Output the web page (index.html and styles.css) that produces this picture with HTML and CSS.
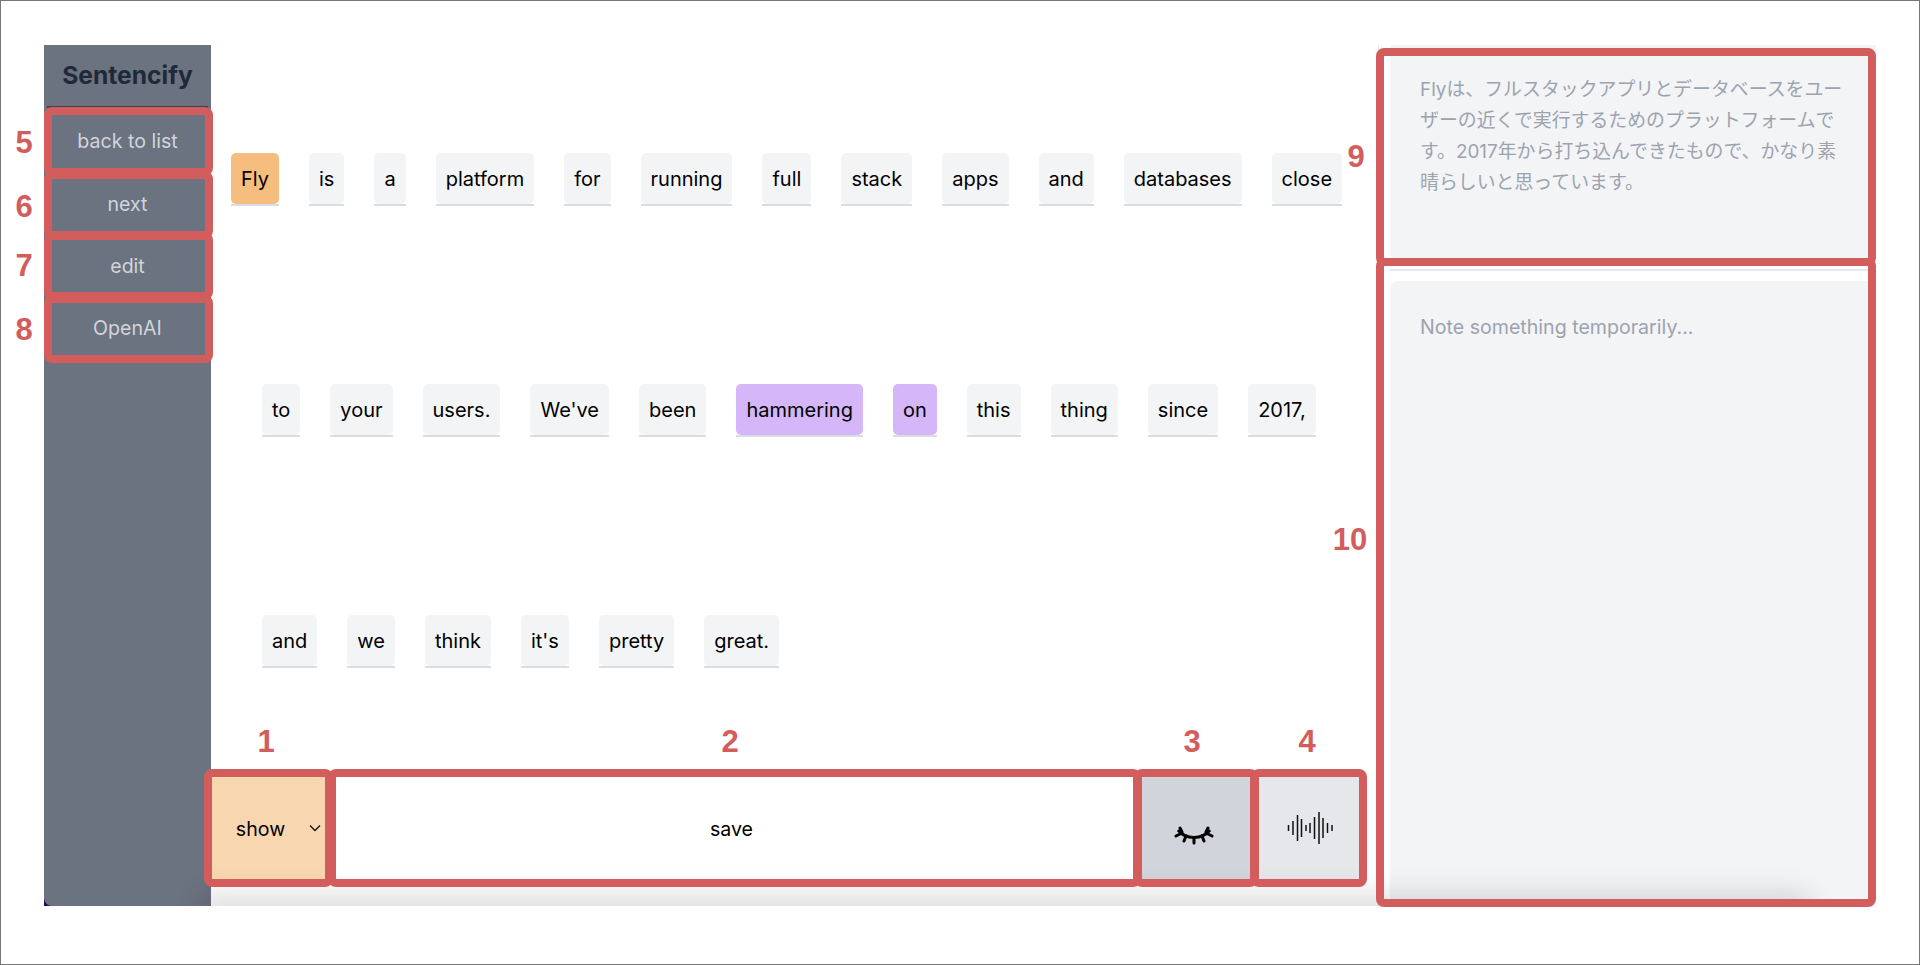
FILE: index.html
```html
<!DOCTYPE html>
<html lang="en">
<head>
    <meta charset="UTF-8">
    <meta name="viewport" content="width=device-width, initial-scale=1.0">
    <title>Sentencify</title>
    <link rel="stylesheet" href="styles.css">
</head>
<body>
    <div class="frame">
        <div class="app">
            <aside class="sidebar">
                <h1 class="brand">Sentencify</h1>
                <button class="side-btn">back to list</button>
                <button class="side-btn">next</button>
                <button class="side-btn">edit</button>
                <button class="side-btn">OpenAI</button>
            </aside>

            <main class="main">
                <div class="lines">
                    <div class="line line-first">
                        <div class="word word-orange"><span>Fly</span></div>
                        <div class="word"><span>is</span></div>
                        <div class="word"><span>a</span></div>
                        <div class="word"><span>platform</span></div>
                        <div class="word"><span>for</span></div>
                        <div class="word"><span>running</span></div>
                        <div class="word"><span>full</span></div>
                        <div class="word"><span>stack</span></div>
                        <div class="word"><span>apps</span></div>
                        <div class="word"><span>and</span></div>
                        <div class="word"><span>databases</span></div>
                        <div class="word"><span>close</span></div>
                    </div>
                    <div class="line">
                        <div class="word"><span>to</span></div>
                        <div class="word"><span>your</span></div>
                        <div class="word"><span>users.</span></div>
                        <div class="word"><span>We've</span></div>
                        <div class="word"><span>been</span></div>
                        <div class="word word-purple"><span>hammering</span></div>
                        <div class="word word-purple"><span>on</span></div>
                        <div class="word"><span>this</span></div>
                        <div class="word"><span>thing</span></div>
                        <div class="word"><span>since</span></div>
                        <div class="word"><span>2017,</span></div>
                    </div>
                    <div class="line">
                        <div class="word"><span>and</span></div>
                        <div class="word"><span>we</span></div>
                        <div class="word"><span>think</span></div>
                        <div class="word"><span>it's</span></div>
                        <div class="word"><span>pretty</span></div>
                        <div class="word"><span>great.</span></div>
                    </div>
                </div>

                <div class="toolbar">
                    <button class="tool tool-show">
                        show
                        <svg class="chevron" width="12" height="8" viewBox="0 0 12 8"><path d="M1 1.5 L6 6.5 L11 1.5" fill="none" stroke="#111" stroke-width="1.3"/></svg>
                    </button>
                    <button class="tool tool-save">save</button>
                    <button class="tool tool-eye">
                        <svg class="eye" width="40" height="24" viewBox="0 0 40 24">
                            <path d="M4 5 C12 15 28 15 36 5" fill="none" stroke="#000" stroke-width="3"/>
                            <path d="M6 3 L8 7 M2 11 L8 8 M10 16 L12 11 M20 18 L20 13 M30 16 L28 11 M38 11 L32 8 M34 3 L32 7" fill="none" stroke="#000" stroke-width="3" stroke-linecap="round"/>
                        </svg>
                    </button>
                    <button class="tool tool-sound">
                        <svg width="46" height="34" viewBox="0 0 46 34">
                            <path d="M1.5 14 V20 M6 10 V24 M10.5 4 V30 M14.5 8 V26 M19 14 V20 M23 12 V22 M27.5 6 V28 M32 1 V33 M36 7 V27 M40.5 12 V22 M45 14 V20" fill="none" stroke="#111" stroke-width="1.5"/>
                        </svg>
                    </button>
                </div>
            </main>

            <section class="notes">
                <div class="panel panel-translation">Flyは、フルスタックアプリとデータベースをユーザーの近くで実行するためのプラットフォームです。2017年から打ち込んできたもので、かなり素晴らしいと思っています。</div>
                <div class="notes-rule"></div>
                <div class="panel panel-note">Note something temporarily...</div>
            </section>
        </div>
    </div>

    <!-- annotation boxes and numbers on top of the screenshot -->
    <div class="marks">
        <div class="box box-1"></div>
        <div class="box box-2"></div>
        <div class="box box-3"></div>
        <div class="box box-4"></div>
        <div class="box box-5"></div>
        <div class="box box-6"></div>
        <div class="box box-7"></div>
        <div class="box box-8"></div>
        <div class="box box-9"></div>
        <div class="box box-10"></div>
        <div class="num num-1">1</div>
        <div class="num num-2">2</div>
        <div class="num num-3">3</div>
        <div class="num num-4">4</div>
        <div class="num num-5">5</div>
        <div class="num num-6">6</div>
        <div class="num num-7">7</div>
        <div class="num num-8">8</div>
        <div class="num num-9">9</div>
        <div class="num num-10">10</div>
    </div>
</body>
</html>
```

FILE: styles.css
```css
* {
    box-sizing: border-box;
}
body {
    position: relative;
    margin: 0;
    background-color: #fff;
    font-family: Inter, "Noto Sans CJK JP", sans-serif;
}
button {
    padding: 0;
    font-family: inherit;
    border: none;
    cursor: pointer;
}
.frame {
    height: 965px;
    padding: 44px 43px 58px;
    border: 1px solid #777;
}
.app {
    position: relative;
    display: flex;
    height: 861px;
    overflow: hidden;
    background-color: #1e0a5c;
}
/* soft shadow that comes up from the bottom edge */
.app::after {
    content: "";
    position: absolute;
    left: 170px;
    right: 80px;
    bottom: -12px;
    height: 12px;
    box-shadow: 0 0 26px 14px rgba(0, 0, 0, 0.12);
}

/* sidebar */
.sidebar {
    display: flex;
    flex-direction: column;
    flex: 0 0 167px;
    background-color: #6b7280;
    border-bottom-left-radius: 8px;
}
.brand {
    margin: 0 3px;
    height: 63px;
    padding-top: 12px;
    border-bottom: 2px solid #374151;
    font-size: 24.6px;
    line-height: 36px;
    font-weight: 700;
    text-align: center;
    color: #1f2937;
}
.side-btn {
    height: 62.4px;
    background: none;
    font-size: 19.6px;
    color: #d1d5db;
}
.side-btn:first-of-type {
    margin-top: 2px;
}

/* words */
.main {
    display: flex;
    flex-direction: column;
    flex: 0 0 1167px;
    background-color: #fff;
}
.lines {
    flex: 1;
    display: flex;
    flex-direction: column;
    gap: 178px;
    padding-top: 108px;
}
.line {
    display: flex;
    gap: 30px;
    padding-left: 51px;
}
.line-first {
    padding-left: 20px;
}
.word {
    border-bottom: 2px solid #d9dce1;
    font-size: 20px;
    color: #000;
}
.word span {
    display: block;
    height: 51px;
    padding: 0 10px;
    line-height: 53px;
    background-color: #f3f4f6;
    border-radius: 5px;
}
.word-orange span {
    background-color: #f5bd7e;
}
.word-purple span {
    background-color: #d4b6f9;
}

/* toolbar */
.toolbar {
    display: flex;
    height: 102px;
    margin-bottom: 27px;
    width: 1156px;
}
.tool {
    display: flex;
    align-items: center;
    justify-content: center;
    font-size: 19.6px;
    color: #000;
}
.tool-show {
    position: relative;
    flex: 0 0 119px;
    background-color: #f8d7b0;
    padding: 2px 20px 0 0;
}
.chevron {
    position: absolute;
    right: 9px;
    top: 47px;
}
.tool-save {
    flex: 0 0 807px;
    padding: 2px 4px 0 0;
    background-color: #fff;
}
.tool-eye {
    flex: 0 0 117px;
    background-color: #d1d5db;
    padding: 0 3px 0 0;
}
.eye {
    margin-top: 18px;
}
.tool-sound {
    flex: 0 0 113px;
    padding-right: 2px;
    background-color: #e5e7eb;
}

/* translation and notes */
.notes {
    display: flex;
    flex-direction: column;
    flex: 1;
    padding-left: 11px;
    background-color: #fff;
    border-left: 1px solid #e5e7eb;
}
.panel {
    padding: 29px 28px 0 30px;
    background-color: #f3f4f6;
    font-size: 18.9px;
    line-height: 31px;
    color: #9ca3af;
}
.panel-translation {
    height: 217px;
    border-radius: 0 0 8px 8px;
}
.notes-rule {
    height: 2px;
    margin: 7px 8px 10px 0;
    background-color: #e5e7eb;
}
.panel-note {
    flex: 1;
    padding-top: 31px;
    font-size: 19.6px;
    border-radius: 8px;
}

/* annotations */
.marks {
    position: absolute;
    top: 0;
    left: 0;
    width: 1920px;
    height: 965px;
    pointer-events: none;
}
.box {
    position: absolute;
    border: 8px solid #d35d5d;
    border-radius: 8px;
}
.box-1 { left: 204px; top: 769px; width: 129px; height: 118px; }
.box-2 { left: 328px; top: 769px; width: 813px; height: 118px; }
.box-3 { left: 1134px; top: 769px; width: 124px; height: 118px; }
.box-4 { left: 1251px; top: 769px; width: 116px; height: 118px; }
.box-5 { left: 44px; top: 107px; width: 169px; height: 69px; }
.box-6 { left: 44px; top: 171px; width: 169px; height: 68px; }
.box-7 { left: 44px; top: 232px; width: 169px; height: 68px; }
.box-8 { left: 44px; top: 295px; width: 169px; height: 68px; }
.box-9 { left: 1376px; top: 48px; width: 500px; height: 218px; }
.box-10 { left: 1376px; top: 258px; width: 500px; height: 649px; }
.num {
    position: absolute;
    width: 40px;
    margin-left: -20px;
    margin-top: -18px;
    font-family: "Liberation Sans", Arial, sans-serif;
    font-size: 31px;
    line-height: 36px;
    font-weight: 700;
    text-align: center;
    color: #d35d5d;
}
.num-1 { left: 266px; top: 742px; }
.num-2 { left: 730px; top: 742px; }
.num-3 { left: 1192px; top: 742px; }
.num-4 { left: 1307px; top: 742px; }
.num-5 { left: 24px; top: 143px; }
.num-6 { left: 24px; top: 207px; }
.num-7 { left: 24px; top: 266px; }
.num-8 { left: 24px; top: 330px; }
.num-9 { left: 1356px; top: 157px; }
.num-10 { left: 1350px; top: 540px; }
```
